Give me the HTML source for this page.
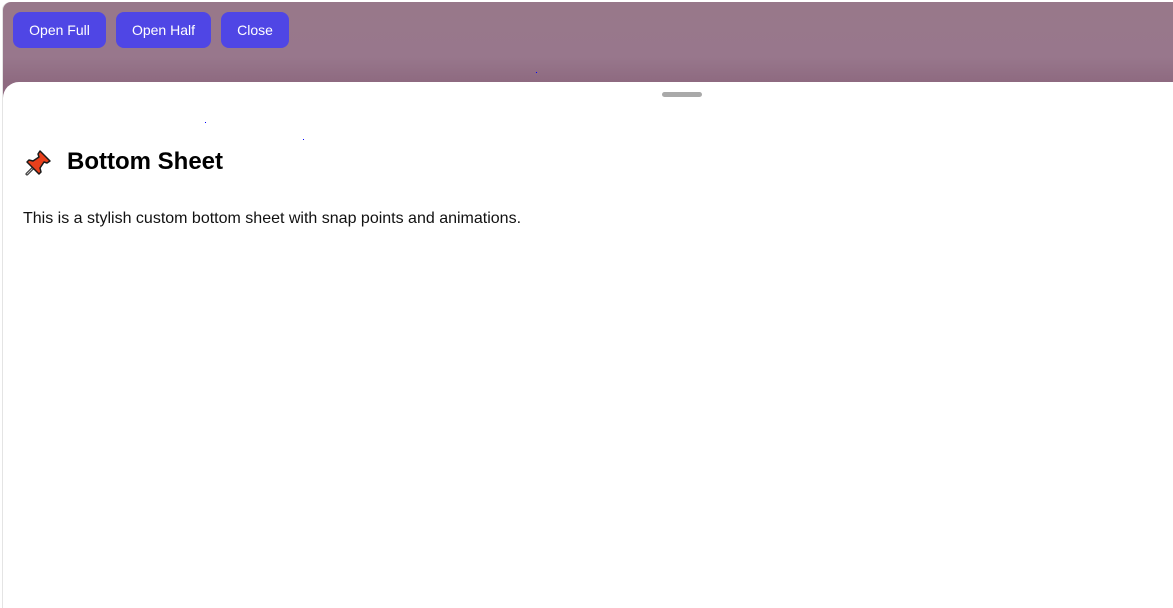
<!DOCTYPE html>
<html><head><meta charset="utf-8"><style>
html,body{margin:0;padding:0;width:1173px;height:608px;overflow:hidden;background:#fff;font-family:"Liberation Sans",Arial,sans-serif}
.frame{position:absolute;left:3px;top:2px;width:1170px;height:606px;background:linear-gradient(#98788a 0,#98778c 55px,#8e6a80 80px);border-top-left-radius:8px;box-shadow:-1px 0 0 #e4e4e4}
.btn{position:absolute;top:10px;height:36px;background:#4f46e5;color:#fff;border-radius:8px;font-size:14px;line-height:36px;text-align:center}
.sheet{position:absolute;left:0;top:80px;width:1170px;height:526px;background:#fff;border-top-left-radius:16px}
.handle{position:absolute;left:659px;top:10px;width:40px;height:5px;border-radius:3px;background:#a9a9a9}
h2{position:absolute;left:64px;top:52px;margin:0;font-size:24px;font-weight:bold;color:#000;line-height:56px}
p{position:absolute;left:20px;top:128px;margin:0;font-size:16px;color:#111}
.dot{position:absolute;width:1px;height:1px;background:#00f}
</style></head><body>
<div class="frame">
  <div class="btn" style="left:10px;width:93px">Open Full</div>
  <div class="btn" style="left:113px;width:95px">Open Half</div>
  <div class="btn" style="left:218px;width:68px">Close</div>
  <div class="dot" style="left:533px;top:70px"></div>
  <div class="sheet">
    <div class="handle"></div>
    <div class="dot" style="left:202px;top:40px"></div>
    <div class="dot" style="left:300px;top:57px"></div>
    <svg style="position:absolute;left:20px;top:66px" width="30" height="30" viewBox="0 0 30 30">
      <path d="M4 26 L11 19" stroke="#222" stroke-width="3" stroke-linecap="round"/>
      <path d="M4 26 L11 19" stroke="#bbb" stroke-width="1.2" stroke-linecap="round"/>
      <path d="M17 3 L27 13 L24 15 L21 14 L17 20 L18 24 L16 26 L4 14 L6 12 L10 13 L16 9 L15 6 Z" fill="#e8401c" stroke="#1a1a1a" stroke-width="1.5" stroke-linejoin="round"/>
    </svg>
    <h2>Bottom Sheet</h2>
    <p>This is a stylish custom bottom sheet with snap points and animations.</p>
  </div>
</div>
</body></html>
